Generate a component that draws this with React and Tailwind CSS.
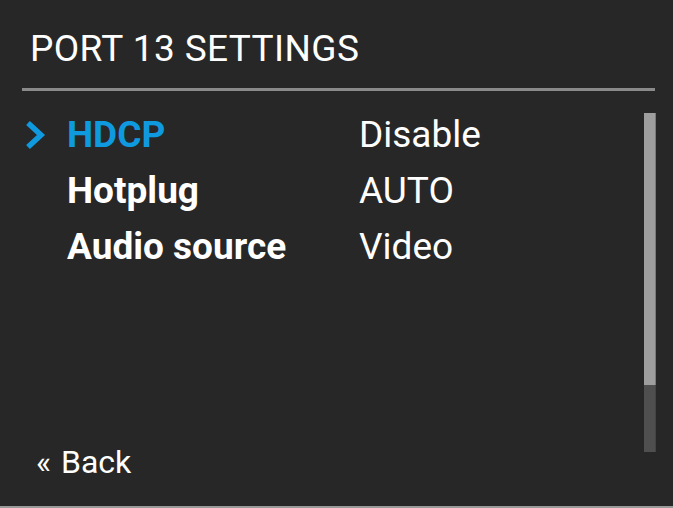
import React from 'react';

const rows = [
  { label: 'HDCP', value: 'Disable', active: true },
  { label: 'Hotplug', value: 'AUTO' },
  { label: 'Audio source', value: 'Video' },
];

const Chevron = () => (
  <svg width="22" height="30" viewBox="0 0 22 30" className="shrink-0">
    <polyline points="4,3 17,15 4,27" fill="none" stroke="#0f9ae0" strokeWidth="5.5" strokeLinejoin="miter" />
  </svg>
);

export default function App() {
  return (
    <div
      className="w-[673px] h-[508px] bg-[#272727] border-b-2 border-[#9a9a9a] flex flex-col overflow-hidden"
      style={{ fontFamily: 'Roboto, "Liberation Sans", sans-serif' }}
    >
      {/* Header */}
      <div className="pl-[30px] pt-[27px] pr-[18px]">
        <h1 className="text-[37px] leading-[44px] text-white tracking-[0.4px]">PORT 13 SETTINGS</h1>
        <div className="mt-[17px] ml-[-8px] h-[3px] bg-[#8a8a8a]" />
      </div>

      {/* Body */}
      <div className="flex flex-1 min-h-0 pr-[17px]">
        <div className="flex-1 flex flex-col">
          <div className="flex-1 flex flex-col pt-[16px] pl-[24px]">
            {rows.map((r) => (
              <div key={r.label} className="flex items-center h-[56px]">
                <div className="w-[43px] flex items-center">{r.active && <Chevron />}</div>
                <span className={`w-[292px] text-[37px] font-bold ${r.active ? 'text-[#0f9ae0]' : 'text-white'}`}>
                  {r.label}
                </span>
                <span className="text-[37px] text-white">{r.value}</span>
              </div>
            ))}
          </div>
          <div className="pl-[36px] pb-[28px] text-[32px] text-white leading-none">
            «<span className="ml-[10px]">Back</span>
          </div>
        </div>

        {/* Scrollbar */}
        <div className="w-[12px] mt-[22px] mb-[54px] flex flex-col">
          <div className="h-[272px] bg-[#9e9e9e] border-r border-[#7a7a7a]" />
          <div className="flex-1 bg-[#4f4f4f] border-r border-[#444]" />
        </div>
      </div>
    </div>
  );
}
